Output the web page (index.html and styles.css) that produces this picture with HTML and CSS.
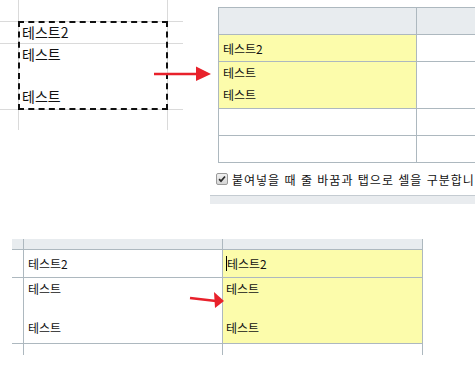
FILE: index.html
```html
<!DOCTYPE html>
<html lang="ko">
<head>
  <meta charset="UTF-8" />
  <meta name="viewport" content="width=device-width, initial-scale=1.0"/>
  <title>붙여넣기 비교</title>
  <link rel="stylesheet" href="styles.css">
</head>
<body>
  <div class="canvas">

    <!-- Excel source selection -->
    <div class="sheet">
      <div class="sheet-cell"></div><div class="sheet-cell"></div><div class="sheet-cell"></div>
      <div class="sheet-cell"></div><div class="sheet-cell sheet-text">테스트2</div><div class="sheet-cell"></div>
      <div class="sheet-cell"></div><div class="sheet-cell sheet-text">테스트<br>&nbsp;<br>테스트</div><div class="sheet-cell"></div>
      <div class="sheet-cell"></div><div class="sheet-cell"></div><div class="sheet-cell"></div>
      <div class="marquee"></div>
    </div>

    <!-- paste with split option -->
    <div class="paste-panel">
      <div class="grid grid-top">
        <div class="cell head"></div><div class="cell head"></div>
        <div class="cell hl single">테스트2</div><div class="cell"></div>
        <div class="cell hl multi">테스트<br>테스트</div><div class="cell"></div>
        <div class="cell"></div><div class="cell"></div>
        <div class="cell"></div><div class="cell"></div>
      </div>
      <label class="option">
        <span class="check">
          <svg width="12" height="12" viewBox="0 0 12 12"><path d="M2.5 6.2 L4.8 8.6 L9.6 3" fill="none" stroke="#2b2b2b" stroke-width="2"/></svg>
        </span>
        <span class="option-text">붙여넣을 때 줄 바꿈과 탭으로 셀을 구분합니다</span>
      </label>
      <div class="footer-bar"></div>
    </div>

    <!-- paste into one cell -->
    <div class="grid grid-bottom">
      <div class="cell head"></div><div class="cell head"></div><div class="cell head"></div>
      <div class="cell"></div><div class="cell single">테스트2</div><div class="cell hl single"><span class="caret"></span>테스트2</div>
      <div class="cell"></div><div class="cell multi">테스트<br>&nbsp;<br>테스트</div><div class="cell hl multi">테스트<br>&nbsp;<br>테스트</div>
      <div class="cell"></div><div class="cell"></div><div class="cell"></div>
    </div>

    <svg class="arrow arrow-top" width="66" height="24" viewBox="0 0 66 24">
      <line x1="4" y1="12" x2="48" y2="12" stroke="#e8212b" stroke-width="2.5"/>
      <polygon points="46,4.5 61,12 46,19" fill="#e8212b"/>
    </svg>
    <svg class="arrow arrow-bottom" width="44" height="26" viewBox="0 0 44 26">
      <line x1="2" y1="11" x2="28" y2="14" stroke="#e8212b" stroke-width="2.5"/>
      <polygon points="26,5 36,14 27,21" fill="#e8212b"/>
    </svg>

  </div>
</body>
</html>
```

FILE: styles.css
```css
body {
  margin: 0;
  background: #fff;
  font-family: "Noto Sans CJK KR", "Noto Sans", sans-serif;
  color: #111;
}

.canvas {
  position: relative;
  width: 475px;
  height: 365px;
  overflow: hidden;
}

/* excel sheet */
.sheet {
  position: absolute;
  left: 0;
  top: 0;
  display: grid;
  grid-template-columns: 18px 148px 15px;
  grid-template-rows: 21px 21px 65px 20px;
  gap: 1px;
  background: #dadada;
}

.sheet-cell {
  background: #fff;
}

.sheet-text {
  font-size: 14px;
  line-height: 21px;
  padding-left: 3px;
  white-space: nowrap;
}

.marquee {
  position: absolute;
  left: 18px;
  top: 21px;
  width: 146px;
  height: 85px;
  border: 2px dashed #111;
}

/* shared grid */
.grid {
  display: grid;
  gap: 1px;
  background: #adb8bf;
  font-size: 12px;
}

.cell {
  background: #fff;
  padding-left: 4px;
  white-space: nowrap;
  overflow: hidden;
}

.cell.head {
  background: #e8ecef;
}

.cell.hl {
  background: #fcfcab;
}

.single {
  display: flex;
  align-items: center;
}

/* top right panel */
.paste-panel {
  position: absolute;
  left: 210px;
  top: 7px;
  width: 265px;
  display: flex;
  flex-direction: column;
}

.grid-top {
  margin-left: 8px;
  padding: 1px 0 1px 1px;
  grid-template-columns: 197px 1fr;
  grid-template-rows: 26px 26px 46px 26px 26px;
}

.grid-top .multi {
  line-height: 22px;
}

.option {
  height: 32px;
  display: flex;
  align-items: center;
  gap: 4px;
  padding-left: 6px;
  white-space: nowrap;
  overflow: hidden;
}

.check {
  flex: 0 0 auto;
  width: 10px;
  height: 10px;
  border: 1px solid #9a9a9a;
  border-radius: 2px;
  background: linear-gradient(#f0f0f0, #d6d6d6);
  display: flex;
  align-items: center;
  justify-content: center;
}

.check svg {
  display: block;
}

.option-text {
  font-size: 12px;
  letter-spacing: 1px;
  color: #111;
}

.footer-bar {
  height: 8px;
  border-top: 1px solid #c4cbd1;
  background: #e9ecef;
}

/* bottom grid */
.grid-bottom {
  position: absolute;
  left: 12px;
  top: 239px;
  padding-right: 1px;
  grid-template-columns: 11px 198px 199px;
  grid-template-rows: 10px 27px 65px 11px;
}

.grid-bottom .cell:nth-child(3n+1) {
  padding-left: 0;
}

.grid-bottom .multi {
  padding-top: 1px;
  line-height: 19.5px;
}

.grid-bottom .hl {
  padding-left: 3px;
}

.caret {
  display: inline-block;
  width: 1px;
  height: 15px;
  background: #000;
}

/* arrows overlaid on the collage */
.arrow {
  position: absolute;
}

.arrow-top {
  left: 150px;
  top: 62px;
}

.arrow-bottom {
  left: 188px;
  top: 287px;
}
```
